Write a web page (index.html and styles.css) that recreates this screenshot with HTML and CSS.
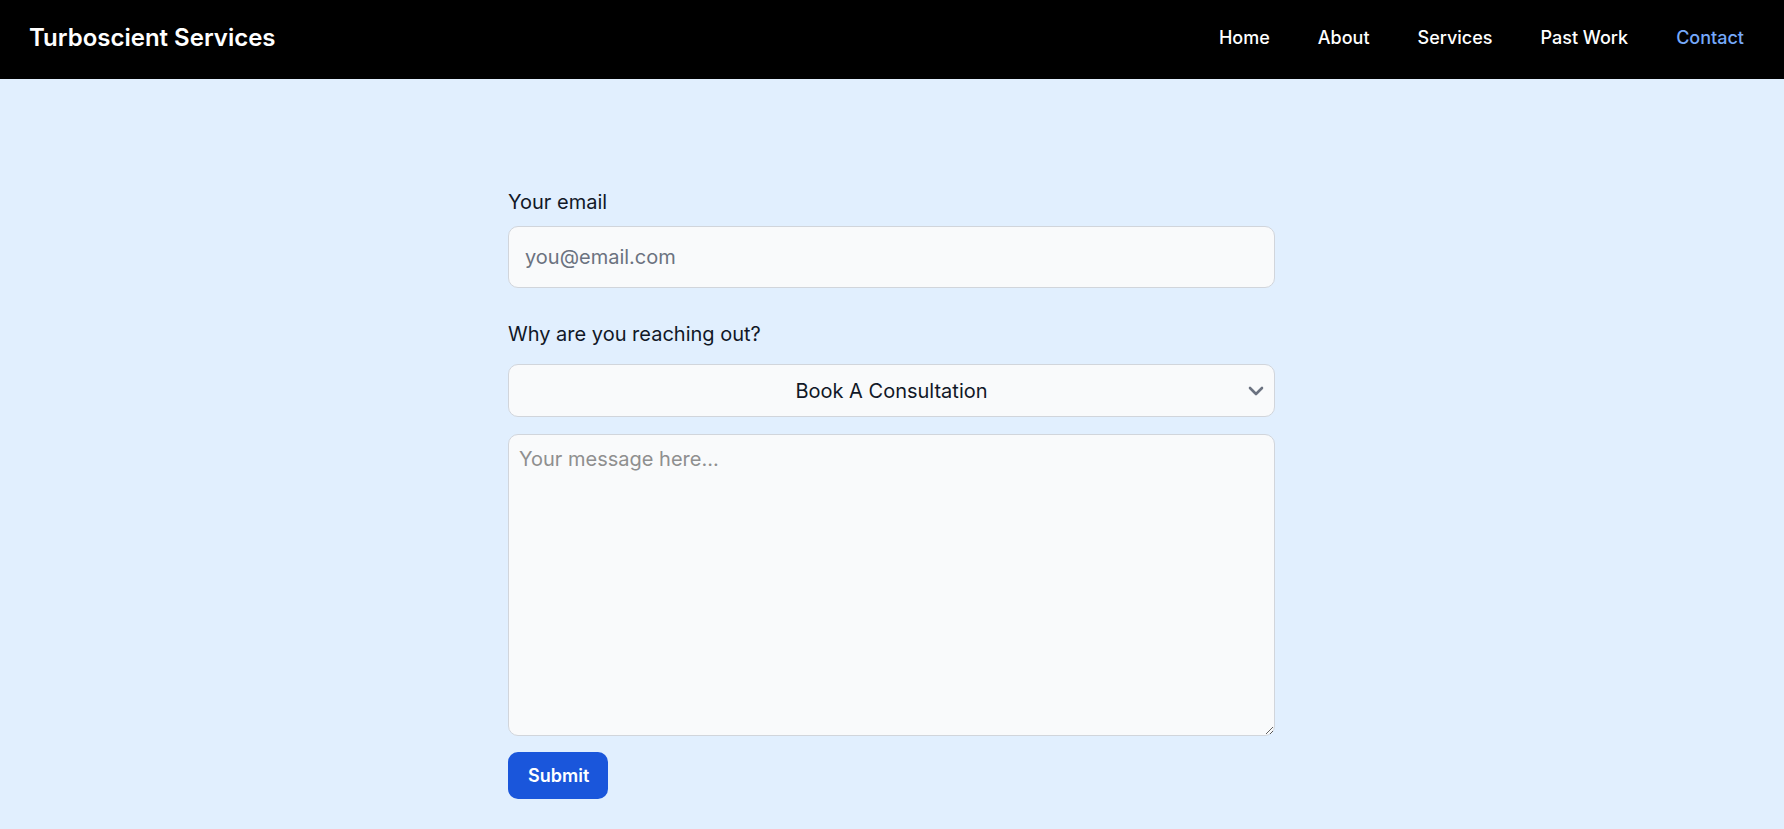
FILE: index.html
```html
<!DOCTYPE html>
<html lang="en">
<head>
<meta charset="utf-8">
<title>Turboscient Services - Contact</title>
<link rel="stylesheet" href="styles.css">
</head>
<body>
<header class="topbar">
  <a class="brand" href="#">Turboscient Services</a>
  <nav class="nav">
    <a href="#">Home</a>
    <a href="#">About</a>
    <a href="#">Services</a>
    <a href="#">Past Work</a>
    <a href="#" class="active">Contact</a>
  </nav>
</header>
<main class="page">
  <form class="contact-form">
    <label class="field-label" for="email">Your email</label>
    <input class="text-input" id="email" type="email" placeholder="you@email.com">
    <label class="field-label second" for="reason">Why are you reaching out?</label>
    <div class="select-wrap">
      <select class="select" id="reason">
        <option>Book A Consultation</option>
        <option>General Question</option>
        <option>Other</option>
      </select>
      <svg class="chevron" width="16" height="10" viewBox="0 0 16 10" aria-hidden="true"><path d="M2 2 L8 8 L14 2" fill="none" stroke="#6b7280" stroke-width="2.6" stroke-linecap="round" stroke-linejoin="round"/></svg>
    </div>
    <textarea class="message" placeholder="Your message here..."></textarea>
    <div class="actions">
      <button type="button" class="submit">Submit</button>
    </div>
  </form>
</main>
</body>
</html>
```
FILE: styles.css
```css
* { box-sizing: border-box; }
html, body { margin: 0; padding: 0; }
body {
  font-family: Inter, "Noto Sans", "Liberation Sans", sans-serif;
  background: #e1effe;
  color: #111827;
  min-height: 829px;
}
.topbar {
  height: 79px;
  background: #000;
  display: flex;
  align-items: center;
  justify-content: space-between;
  padding: 0 40px 0 29px;
}
.brand {
  color: #fff;
  font-size: 24px;
  font-weight: 600;
  text-decoration: none;
  line-height: 32px;
  margin-top: -4px;
}
.nav {
  display: flex;
  gap: 48px;
  margin-top: -4px;
}
.nav a {
  color: #fff;
  font-size: 18px;
  font-weight: 500;
  text-decoration: none;
  line-height: 28px;
}
.nav a.active { color: #76a9fa; }
.page {
  padding-top: 109px;
  display: flex;
  justify-content: center;
}
.contact-form {
  width: 767px;
  margin-right: 1px;
  display: flex;
  flex-direction: column;
}
.field-label {
  font-size: 20px;
  font-weight: 400;
  line-height: 28px;
  color: #111827;
  margin-bottom: 10px;
}
.field-label.second {
  margin-top: 32px;
  margin-bottom: 16px;
}
.text-input {
  font-family: inherit;
  font-size: 20px;
  line-height: 28px;
  padding: 16px;
  border: 1px solid #d1d5db;
  border-radius: 10px;
  background: #f9fafb;
  color: #111827;
  outline: none;
}
.text-input::placeholder { color: #6b7280; }
.select-wrap {
  position: relative;
}
.select {
  width: 100%;
  -webkit-appearance: none;
  appearance: none;
  font-family: inherit;
  font-size: 20px;
  line-height: 28px;
  height: 53px;
  padding: 0 40px;
  text-align: center;
  text-align-last: center;
  border: 1px solid #d1d5db;
  border-radius: 10px;
  background: #f9fafb;
  color: #111827;
  outline: none;
}
.chevron {
  position: absolute;
  right: 11px;
  top: 22px;
  pointer-events: none;
}
.message {
  margin-top: 17px;
  height: 302px;
  font-family: inherit;
  font-size: 20px;
  line-height: 28px;
  padding: 10px;
  border: 1px solid #d1d5db;
  border-radius: 10px;
  background: #f9fafb;
  color: #111827;
  outline: none;
}
.message::placeholder { color: #8f8f8f; }
.actions {
  margin-top: 16px;
  display: flex;
}
.submit {
  font-family: inherit;
  font-size: 18px;
  font-weight: 600;
  line-height: 27px;
  padding: 10px 20px;
  width: 100px;
  border: none;
  border-radius: 10px;
  background: #1a56db;
  color: #fff;
  cursor: pointer;
}
```
